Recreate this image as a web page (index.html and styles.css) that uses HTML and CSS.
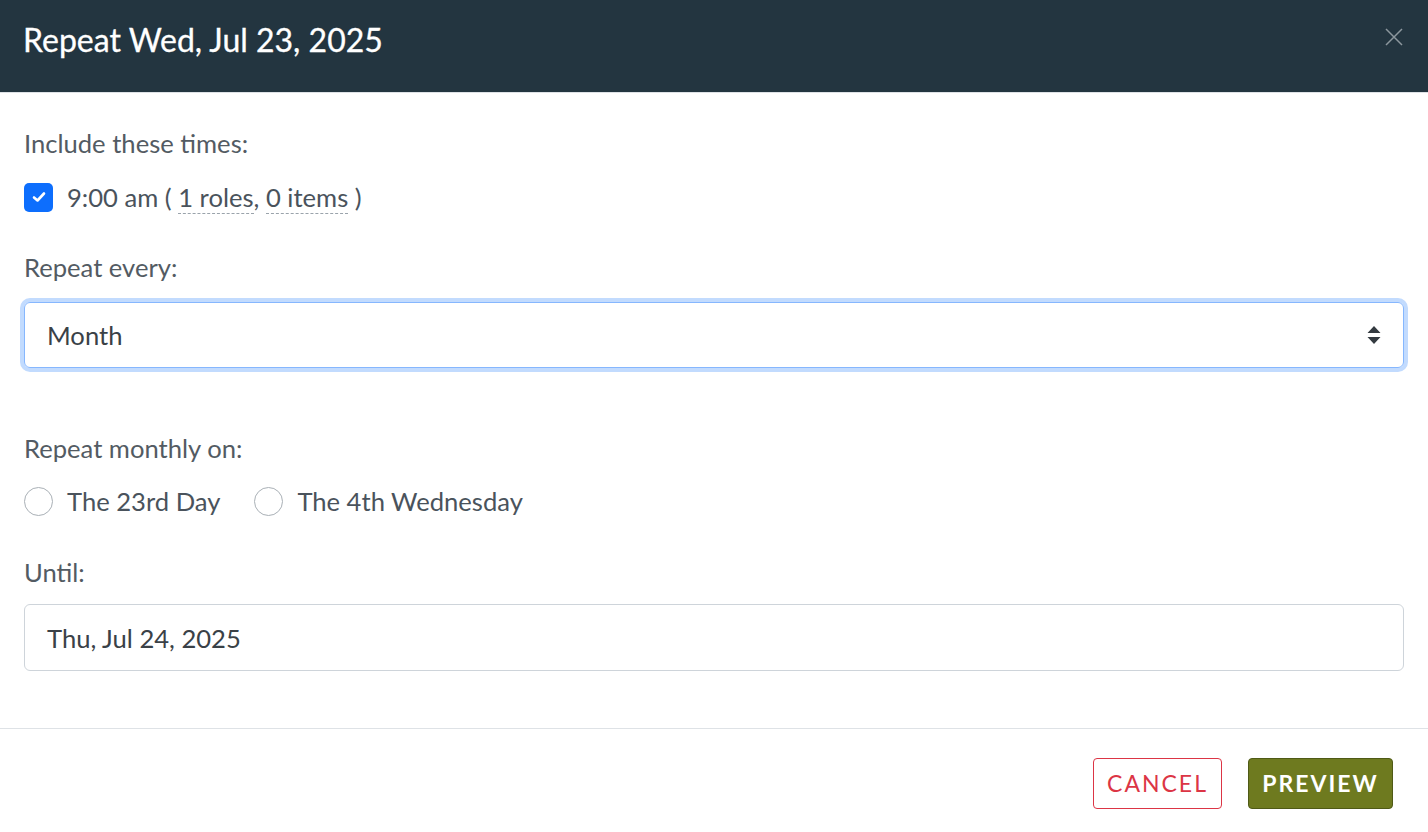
FILE: index.html
```html
<!DOCTYPE html>
<html>
<head>
<meta charset="utf-8">
<link rel="stylesheet" href="styles.css">
</head>
<body>
<div class="modal">
  <div class="modal-header">
    <h1 class="title">Repeat Wed, Jul 23, 2025</h1>
    <button class="close" aria-label="Close">
      <svg width="20" height="20" viewBox="0 0 20 20"><path d="M2 2 L18 18 M18 2 L2 18" stroke="#8d979e" stroke-width="1.5" fill="none"/></svg>
    </button>
  </div>
  <div class="modal-body">
    <div class="group g-times">
      <div class="label">Include these times:</div>
      <label class="check-row">
        <span class="checkbox">
          <svg width="14" height="12" viewBox="0 0 14 12"><path d="M2 6.5 L5.5 9.5 L12 2.5" stroke="#fff" stroke-width="2.6" fill="none" stroke-linecap="round" stroke-linejoin="round"/></svg>
        </span>
        <span class="row-text">9:00 am ( <span class="dotted">1 roles</span>, <span class="dotted">0 items</span> )</span>
      </label>
    </div>
    <div class="group g-every">
      <div class="label">Repeat every:</div>
      <div class="select">
        <span>Month</span>
        <svg class="arrows" width="14" height="20" viewBox="0 0 14 20"><path d="M7 1 L13.5 8 L0.5 8 Z M7 19 L13.5 12 L0.5 12 Z" fill="#343a40"/></svg>
      </div>
    </div>
    <div class="group g-monthly">
      <div class="label">Repeat monthly on:</div>
      <div class="radios">
        <label class="radio-row"><span class="radio"></span><span>The 23rd Day</span></label>
        <label class="radio-row"><span class="radio"></span><span>The 4th Wednesday</span></label>
      </div>
    </div>
    <div class="group g-until">
      <div class="label">Until:</div>
      <div class="input">Thu, Jul 24, 2025</div>
    </div>
  </div>
  <div class="modal-footer">
    <button class="btn btn-cancel">CANCEL</button>
    <button class="btn btn-preview">PREVIEW</button>
  </div>
</div>
</body>
</html>
```

FILE: styles.css
```css
* { box-sizing: border-box; }
html, body { margin: 0; padding: 0; }
body {
  font-family: Lato, "Open Sans", sans-serif;
  font-size: 25.6px;
  line-height: 36px;
  color: #4f5861;
  background: #fff;
  width: 1428px;
  height: 832px;
  overflow: hidden;
}
.modal { display: flex; flex-direction: column; height: 832px; }
.modal-header {
  height: 93px;
  background: #233540;
  display: flex;
  align-items: center;
  justify-content: space-between;
  padding: 0 24px 0 23px;
  border-bottom: 1px solid #dee2e6;
}
.title {
  margin: 0;
  font-size: 32px;
  font-weight: 400;
  color: #fff;
  line-height: 36px;
  margin-top: -13px;
  -webkit-text-stroke: 0.3px #fff;
}
.close {
  background: none;
  border: 0;
  padding: 0;
  width: 20px;
  height: 20px;
  margin-top: -18px;
  margin-right: 0;
}
.close svg { display: block; }
.modal-body {
  padding: 32px 24px 0 24px;
  height: 636px;
  border-bottom: 1px solid #dee2e6;
}
.label { color: #535b63; }
.g-times .label { margin-bottom: 18px; }
.check-row { display: flex; align-items: center; height: 36px; }
.checkbox {
  width: 29px; height: 29px;
  border-radius: 5px;
  background: #0d6efd;
  display: flex; align-items: center; justify-content: center;
  margin-right: 14px;
}
.row-text { color: #4a535c; }
.dotted { border-bottom: 1px dashed #9aa3ab; padding-bottom: 0; display: inline-block; line-height: 32px; }
.g-every { margin-top: 34px; }
.g-every .label { margin-bottom: 17px; }
.select {
  height: 66px;
  border: 1px solid #86b7fe;
  border-radius: 6px;
  box-shadow: 0 0 0 4px #c2dbfe;
  display: flex; align-items: center; justify-content: space-between;
  padding: 0 22px 0 22px;
  color: #3a4147;
}
.arrows { display: block; }
.g-monthly { margin-top: 62px; }
.g-monthly .label { margin-bottom: 17px; }
.radios { display: flex; gap: 34px; height: 36px; }
.radio-row { display: flex; align-items: center; color: #4a535c; }
.radio {
  width: 29px; height: 29px; border-radius: 50%;
  border: 1px solid #a9b0b6;
  margin-right: 14px;
  background: #fff;
}
.g-until { margin-top: 35px; }
.g-until .label { margin-bottom: 14px; }
.input {
  height: 67px;
  border: 1px solid #ced4da;
  border-radius: 6px;
  display: flex; align-items: center;
  padding: 0 22px;
  color: #3a4147;
}
.modal-footer {
  flex: 1;
  display: flex;
  justify-content: flex-end;
  align-items: flex-start;
  padding: 29px 35px 0 0;
  gap: 26px;
}
.btn {
  font-family: Lato, sans-serif;
  font-size: 23px;
  letter-spacing: 2px;
  height: 51px;
  border-radius: 4px;
  padding: 0;
  line-height: 49px;
}
.btn-cancel {
  width: 129px;
  background: #fff;
  color: #dc3545;
  border: 1px solid #dc3545;
}
.btn-preview {
  width: 145px;
  background: #6e7a1f;
  color: #fff;
  border: 1px solid #4f5a16;
  font-weight: 700;
}
```
